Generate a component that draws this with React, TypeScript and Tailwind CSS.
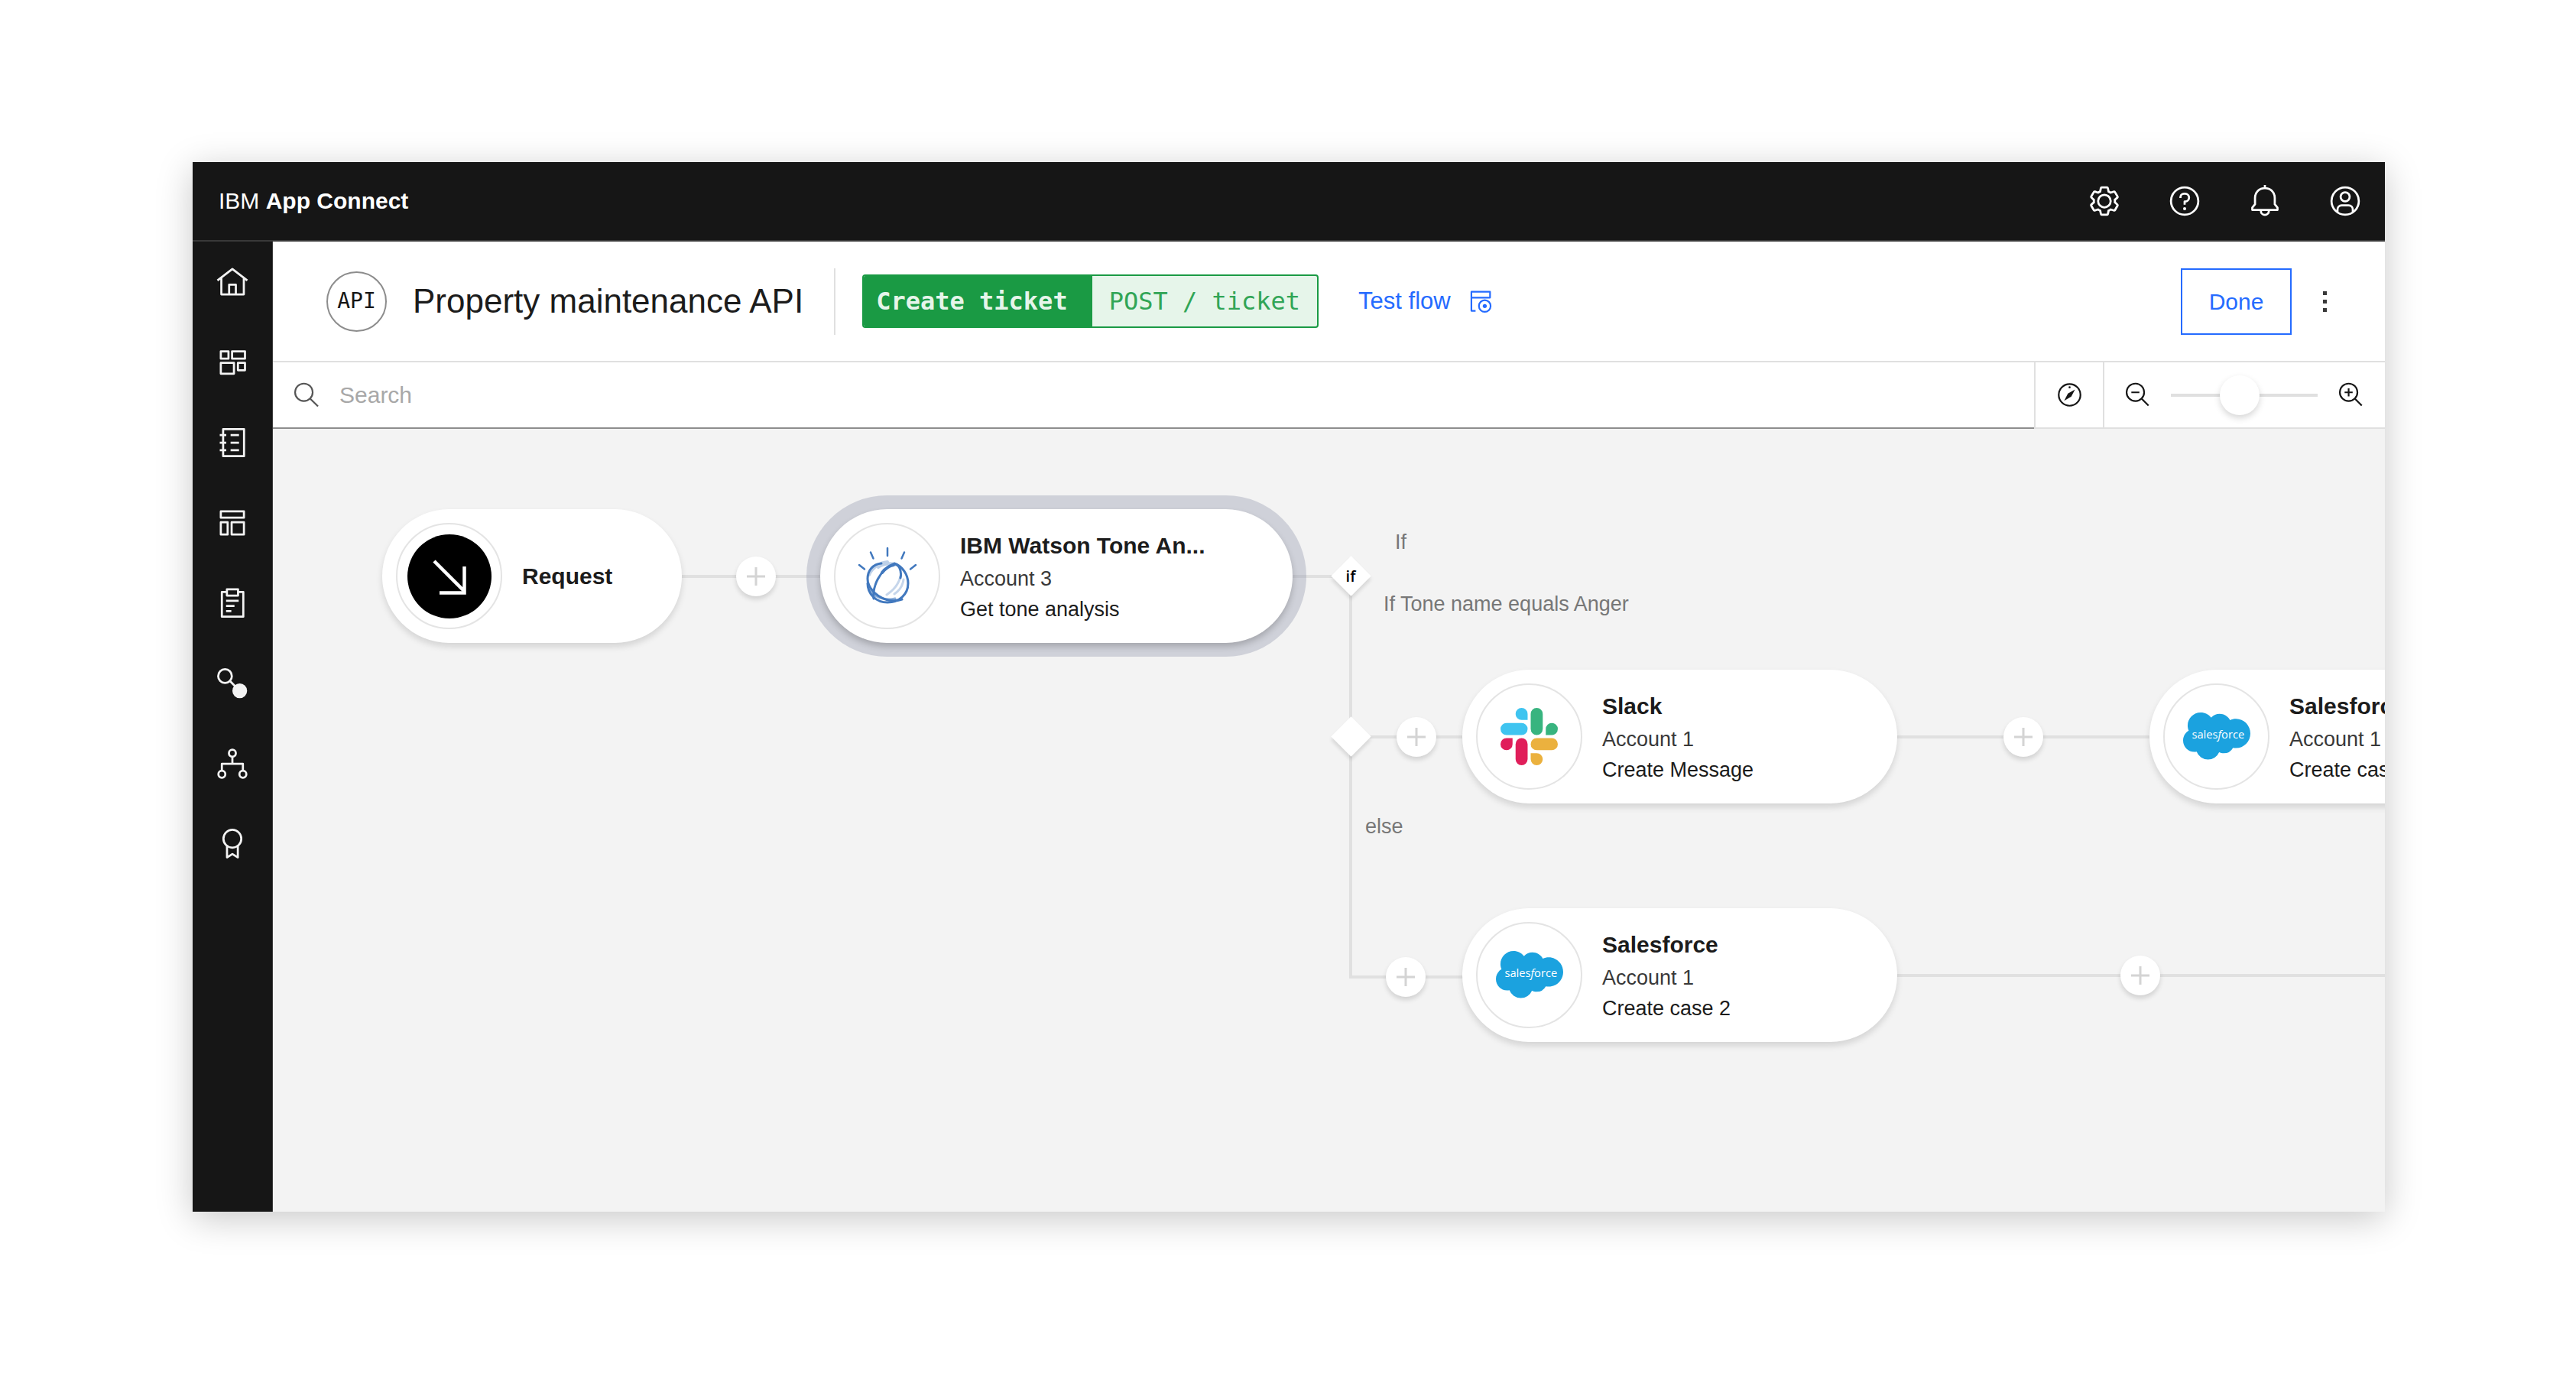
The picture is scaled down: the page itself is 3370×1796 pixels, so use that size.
import React from 'react';

type IconProps = { children: React.ReactNode; className?: string; stroke?: number };

function Icon({ children, className = 'size-11', stroke = 2 }: IconProps) {
  return (
    <svg
      viewBox="0 0 32 32"
      fill="none"
      stroke="currentColor"
      strokeWidth={stroke}
      strokeLinejoin="round"
      className={className}
      aria-hidden="true"
    >
      {children}
    </svg>
  );
}

const headerActions = [
  {
    label: 'Settings',
    icon: (
      <Icon stroke={0}>
        <path
          fill="currentColor"
          d="M27,16.76c0-.25,0-.5,0-.76s0-.51,0-.77l1.92-1.68A2,2,0,0,0,29.3,11L26.94,7a2,2,0,0,0-1.73-1,2,2,0,0,0-.64.1l-2.43.82a11.35,11.35,0,0,0-1.31-.75l-.51-2.52a2,2,0,0,0-2-1.61H13.64a2,2,0,0,0-2,1.61l-.51,2.52a11.48,11.48,0,0,0-1.32.75L7.43,6.06A2,2,0,0,0,6.79,6,2,2,0,0,0,5.06,7L2.7,11a2,2,0,0,0,.41,2.51L5,15.24c0,.25,0,.5,0,.76s0,.51,0,.77L3.11,18.45A2,2,0,0,0,2.7,21L5.06,25a2,2,0,0,0,1.73,1,2,2,0,0,0,.64-.1l2.43-.82a11.35,11.35,0,0,0,1.31.75l.51,2.52a2,2,0,0,0,2,1.61h4.72a2,2,0,0,0,2-1.61l.51-2.52a11.48,11.48,0,0,0,1.32-.75l2.42.82a2,2,0,0,0,.64.1,2,2,0,0,0,1.73-1L29.3,21a2,2,0,0,0-.41-2.51ZM25.21,24l-3.43-1.16a8.86,8.86,0,0,1-2.71,1.57L18.36,28H13.64l-.71-3.55a9.36,9.36,0,0,1-2.7-1.57L6.79,24,4.43,20l2.72-2.4a8.9,8.9,0,0,1,0-3.13L4.43,12,6.79,8l3.43,1.16a8.86,8.86,0,0,1,2.71-1.57L13.64,4h4.72l.71,3.55a9.36,9.36,0,0,1,2.7,1.57L25.21,8,27.57,12l-2.72,2.4a8.9,8.9,0,0,1,0,3.13L27.57,20Z"
        />
        <circle cx="16" cy="16" r="6" strokeWidth="2" />
      </Icon>
    ),
  },
  {
    label: 'Help',
    icon: (
      <Icon>
        <circle cx="16" cy="16" r="13" />
        <path d="M12 13v-.5A3.5 3.5 0 0 1 15.5 9h1a3.7 3.7 0 0 1 0 7.4H16v3" />
        <circle cx="16" cy="23.3" r="1.5" fill="currentColor" stroke="none" />
      </Icon>
    ),
  },
  {
    label: 'Notifications',
    icon: (
      <Icon>
        <path d="M16 3.7C10.5 3.7 6.6 7.7 6.6 13v6L4 22.2v2.2h24v-2.200L25.4 19v-6C25.4 7.7 21.5 3.7 16 3.7ZM16 3.7V.8M12.2 24.5v.9a3.8 3.8 0 0 0 7.6 0v-.9" />
      </Icon>
    ),
  },
  {
    label: 'Profile',
    icon: (
      <Icon>
        <circle cx="16" cy="16" r="13" />
        <circle cx="16" cy="12" r="4.3" />
        <path d="M8.7 26.5V24a4 4 0 0 1 4-4h6.6a4 4 0 0 1 4 4v2.5" />
      </Icon>
    ),
  },
];

const navItems = [
  {
    label: 'Home',
    icon: (
      <Icon>
        <path d="M1.8 14.5 16 3.5l14.2 11M5.5 12v15.700h21.4V12M12.9 27.500v-9h6.4v9" />
      </Icon>
    ),
  },
  {
    label: 'Dashboard',
    icon: (
      <Icon>
        <path d="M5 5.500h7.300v7H5zM15.700 5.500H28v7H15.700zM5 16.500h12.500v10.300H5zM21.300 16.500H28v7h-6.700z" />
      </Icon>
    ),
  },
  {
    label: 'Catalog',
    icon: (
      <Icon>
        <path d="M7.200 3.200h19.900v25.700H7.200zM4 8.800h6.200M4 16h6.200M4 23.200h6.200M14.300 8.800h8M14.300 16h8M14.300 23.200h8" />
      </Icon>
    ),
  },
  {
    label: 'Templates',
    icon: (
      <Icon>
        <path d="M5 5h22v6H5zM5 15.300h6.500V27H5zM15.300 15.300H27V27H15.300z" />
      </Icon>
    ),
  },
  {
    label: 'Logs',
    icon: (
      <Icon>
        <path d="M10.500 5.300H6v23.600h20.400V5.300h-4.500M10.800 2.800h10.600v6H10.800zM10 13.800h12M10 18.600h8M10 23.500h5" />
      </Icon>
    ),
  },
  {
    label: 'Connectivity',
    icon: (
      <Icon>
        <circle cx="9" cy="9" r="6.500" />
        <path d="m13.500 13.500 5 5" />
        <circle cx="23" cy="23" r="7" fill="currentColor" stroke="none" />
      </Icon>
    ),
  },
  {
    label: 'Topology',
    icon: (
      <Icon>
        <circle cx="16" cy="6" r="3.300" />
        <circle cx="6" cy="26" r="3.300" />
        <circle cx="26" cy="26" r="3.300" />
        <path d="M16 9v7M6 23v-7h20v7" />
      </Icon>
    ),
  },
  {
    label: 'Certificates',
    icon: (
      <Icon>
        <circle cx="16" cy="11" r="8.500" />
        <path d="M10.900 17.500v11.300L16 25.500l5.200 3.300V17.500" />
      </Icon>
    ),
  },
];

function WatsonLogo() {
  return (
    <svg
      viewBox="0 0 80 80"
      className="size-20"
      fill="none"
      stroke="#4178be"
      strokeWidth="3"
      strokeLinecap="round"
      aria-hidden="true"
    >
      <path d="M40 3v10M18 8.500l3.500 8M62 8.500l-3.500 8M3 25l7 5.500M77 25l-7 5.500" strokeWidth="2.500" />
      <path d="M16 38c4-9 13-16 24-17M28 28c6-5 18-6 24-3" strokeOpacity=".35" strokeWidth="4" />
      <path d="M57 40c-2 9-9 18-18 24M61 44c-1 8-6 15-12 19" strokeOpacity=".3" />
      <path d="M32 23c-11 1-18 9-18 20 0 17 23 34 45 27" />
      <path d="M22 69c-2-16 8-37 25-45 8-2 12 9 10 18" />
      <path d="M33 35c4-5 9-9 15-10" strokeWidth="4" />
      <path d="M49 23c11 4 18 15 18 26 0 15-12 25-27 25S14 63 14 49" />
      <path d="M16 57c6 10 20 15 34 12" strokeOpacity=".6" />
    </svg>
  );
}

function SlackLogo() {
  return (
    <svg viewBox="0 0 24 24" className="size-[75px]" aria-hidden="true">
      <path
        fill="#e01e5a"
        d="M5.042 15.165a2.528 2.528 0 0 1-2.520 2.523A2.528 2.528 0 0 1 0 15.165a2.527 2.527 0 0 1 2.522-2.520h2.520v2.520zM6.313 15.165a2.527 2.527 0 0 1 2.521-2.520 2.527 2.527 0 0 1 2.521 2.520v6.313A2.528 2.528 0 0 1 8.834 24a2.528 2.528 0 0 1-2.521-2.522v-6.313z"
      />
      <path
        fill="#3fc4f0"
        d="M8.834 5.042a2.528 2.528 0 0 1-2.521-2.520A2.528 2.528 0 0 1 8.834 0a2.528 2.528 0 0 1 2.521 2.522v2.520H8.834zM8.834 6.313a2.528 2.528 0 0 1 2.521 2.521 2.528 2.528 0 0 1-2.521 2.521H2.522A2.528 2.528 0 0 1 0 8.834a2.528 2.528 0 0 1 2.522-2.521h6.312z"
      />
      <path
        fill="#38b47f"
        d="M18.956 8.834a2.528 2.528 0 0 1 2.522-2.521A2.528 2.528 0 0 1 24 8.834a2.528 2.528 0 0 1-2.522 2.521h-2.522V8.834zM17.688 8.834a2.528 2.528 0 0 1-2.523 2.521 2.527 2.527 0 0 1-2.520-2.521V2.522A2.527 2.527 0 0 1 15.165 0a2.528 2.528 0 0 1 2.523 2.522v6.312z"
      />
      <path
        fill="#ebb13e"
        d="M15.165 18.956a2.528 2.528 0 0 1 2.523 2.522A2.528 2.528 0 0 1 15.165 24a2.527 2.527 0 0 1-2.520-2.522v-2.522h2.520zM15.165 17.688a2.527 2.527 0 0 1-2.520-2.523 2.526 2.526 0 0 1 2.520-2.520h6.313A2.527 2.527 0 0 1 24 15.165a2.528 2.528 0 0 1-2.522 2.523h-6.313z"
      />
    </svg>
  );
}

function SalesforceLogo() {
  return (
    <svg viewBox="0 3.600 24 17.200" className="w-[88px]" aria-hidden="true">
      <path
        fill="#1ba2df"
        d="M10.006 5.415a4.195 4.195 0 0 1 3.045-1.306c1.560 0 2.954.9 3.690 2.205.63-.3 1.350-.45 2.100-.45 2.850 0 5.159 2.340 5.159 5.220s-2.310 5.220-5.176 5.220c-.345 0-.69-.044-1.020-.104a3.750 3.750 0 0 1-3.300 1.950c-.6 0-1.155-.15-1.650-.375A4.314 4.314 0 0 1 8.880 20.400a4.302 4.302 0 0 1-4.050-2.820c-.27.062-.54.076-.825.076-2.204 0-4.005-1.800-4.005-4.050 0-1.500.811-2.805 2.010-3.510-.255-.57-.39-1.200-.39-1.846 0-2.580 2.100-4.650 4.650-4.650 1.530 0 2.850.705 3.720 1.800"
      />
      <text x="12.500" y="12.800" textAnchor="middle" fontSize="4" fill="#fff" className="font-['Open_Sans',sans-serif]">
        sales<tspan fontStyle="italic">f</tspan>orce
      </text>
    </svg>
  );
}

function RequestLogo() {
  return (
    <span className="flex size-[110px] items-center justify-center rounded-full bg-black text-white">
      <svg viewBox="0 0 44 54" className="h-[54px] w-11" fill="none" stroke="currentColor" strokeWidth="4.500" aria-hidden="true">
        <path d="m2 7 38 38M9 48.500h32.500V14" />
      </svg>
    </span>
  );
}

type NodeCardProps = {
  place: string;
  logo: React.ReactNode;
  title: string;
  account?: string;
  action?: string;
  selected?: boolean;
};

function NodeCard({ place, logo, title, account, action, selected }: NodeCardProps) {
  return (
    <button
      type="button"
      className={`absolute flex h-[175px] items-center gap-[26px] rounded-full bg-white pl-[18px] text-left ${place} ${
        selected
          ? 'shadow-[0_5px_9px_rgba(0,0,0,0.2),0_0_0_18px_rgba(141,147,170,0.35)]'
          : 'shadow-[0_5px_9px_rgba(0,0,0,0.13)]'
      }`}
    >
      <span className="flex size-[139px] shrink-0 items-center justify-center rounded-full border-2 border-[#e4e4e4]">
        {logo}
      </span>
      <span className="flex flex-col whitespace-nowrap">
        <span className="text-[30px] leading-[46px] font-bold text-[#1c1c1c]">{title}</span>
        {account && <span className="text-[27px] leading-10 text-[#393939]">{account}</span>}
        {action && <span className="text-[27px] leading-10 text-[#1c1c1c]">{action}</span>}
      </span>
    </button>
  );
}

function AddButton({ place }: { place: string }) {
  return (
    <button
      type="button"
      aria-label="Add node"
      className={`absolute flex size-[52px] items-center justify-center rounded-full bg-white text-[#d4d4d4] shadow-[0_4px_6px_rgba(0,0,0,0.14)] ${place}`}
    >
      <svg viewBox="0 0 24 24" className="size-6" stroke="currentColor" strokeWidth="3" aria-hidden="true">
        <path d="M12 0v24M0 12h24" />
      </svg>
    </button>
  );
}

function Wire({ place }: { place: string }) {
  return <span className={`absolute bg-[#e0e0e0] ${place}`} />;
}

function Diamond({ place }: { place: string }) {
  return <span className={`absolute size-[37px] rotate-45 bg-white shadow-[3px_3px_5px_rgba(0,0,0,0.12)] ${place}`} />;
}

function FlowCanvas() {
  return (
    <main className="relative flex-1 overflow-hidden bg-[#f3f3f3]">
      <Wire place="left-[535px] top-[191px] h-1 w-[182px]" />
      <Wire place="left-[1334px] top-[191px] h-1 w-[60px]" />
      <Wire place="left-[1408px] top-[193px] h-[526px] w-1" />
      <Wire place="left-[1410px] top-[401px] h-1 w-[1060px]" />
      <Wire place="left-[1408px] top-[715px] h-1 w-[160px]" />
      <Wire place="left-[2120px] top-[713px] h-1 right-0" />

      <NodeCard place="left-[143px] top-[105px] w-[392px]" logo={<RequestLogo />} title="Request" />
      <AddButton place="left-[606px] top-[167px]" />
      <NodeCard
        place="left-[716px] top-[105px] w-[618px]"
        logo={<WatsonLogo />}
        title="IBM Watson Tone An..."
        account="Account 3"
        action="Get tone analysis"
        selected
      />

      <Diamond place="left-[1392px] top-[174px]" />
      <span className="absolute top-[177px] left-[1384px] w-[52px] text-center font-['Open_Sans',sans-serif] text-xl leading-8 font-semibold text-black">
        if
      </span>
      <span className="absolute top-[128px] left-[1468px] text-[27px] leading-10 text-[#777]">If</span>
      <span className="absolute top-[209px] left-[1453px] text-[27px] leading-10 whitespace-nowrap text-[#777]">
        If Tone name equals Anger
      </span>

      <Diamond place="left-[1392px] top-[384px]" />
      <AddButton place="left-[1470px] top-[377px]" />
      <NodeCard
        place="left-[1556px] top-[315px] w-[569px]"
        logo={<SlackLogo />}
        title="Slack"
        account="Account 1"
        action="Create Message"
      />
      <AddButton place="left-[2264px] top-[377px]" />
      <NodeCard
        place="left-[2455px] top-[315px] w-[569px]"
        logo={<SalesforceLogo />}
        title="Salesforce"
        account="Account 1"
        action="Create case 1"
      />

      <span className="absolute top-[500px] left-[1429px] text-[27px] leading-10 text-[#777]">else</span>
      <AddButton place="left-[1456px] top-[691px]" />
      <NodeCard
        place="left-[1556px] top-[627px] w-[569px]"
        logo={<SalesforceLogo />}
        title="Salesforce"
        account="Account 1"
        action="Create case 2"
      />
      <AddButton place="left-[2417px] top-[689px]" />
    </main>
  );
}

function Toolbar() {
  return (
    <div className="flex h-[158px] items-center border-b-2 border-[#e0e0e0] bg-white pr-[35px] pl-[70px]">
      <span className="flex size-[79px] items-center justify-center rounded-full border-2 border-[#8d8d8d] font-['DejaVu_Sans_Mono',monospace] text-[28px] font-medium text-[#161616]">
        API
      </span>
      <h1 className="ml-[34px] text-[44px] leading-[60px] whitespace-nowrap text-[#1c1c1c]">Property maintenance API</h1>
      <span className="ml-10 h-[87px] w-0.5 bg-[#e0e0e0]" />
      <button
        type="button"
        className="ml-[35px] flex h-[70px] overflow-hidden rounded border-2 border-[#1a9a44] bg-[#e6f5ea] font-['DejaVu_Sans_Mono','Liberation_Mono',monospace] text-[32px] leading-[66px] whitespace-pre"
      >
        <span className="bg-[#1a9a44] pr-8 pl-4 font-bold text-[#e6f5ea]">Create ticket</span>
        <span className="px-[22px] text-[#31a556]">POST / ticket</span>
      </button>
      <a href="#test" className="ml-[52px] flex items-center gap-[22px] text-[31px] leading-10 text-[#256bff]">
        Test flow
        <Icon className="size-[35px]">
          <path d="M4.500 4.300h22.300v7H4.500zM4.500 11v16H9.500" />
          <circle cx="20.500" cy="21.300" r="7" />
          <circle cx="20.500" cy="21.300" r="2.400" fill="currentColor" stroke="none" />
        </Icon>
      </a>
      <button
        type="button"
        className="ml-auto h-[87px] w-[145px] border-2 border-[#256bff] text-[30px] text-[#256bff]"
      >
        Done
      </button>
      <button type="button" aria-label="More options" className="flex h-[87px] w-[87px] flex-col items-center justify-center gap-1.5 text-[#393939]">
        <span className="size-[5px] bg-current" />
        <span className="size-[5px] bg-current" />
        <span className="size-[5px] bg-current" />
      </button>
    </div>
  );
}

function SearchRow() {
  return (
    <div className="flex h-[87px] border-b-2 border-[#e0e0e0] bg-white text-[#161616]">
      <label className="-mb-0.5 flex flex-1 items-center gap-[26px] border-b-2 border-[#8d8d8d] pl-[26px]">
        <Icon className="size-[35px] text-[#555]">
          <circle cx="13.300" cy="13" r="10.500" />
          <path d="m20.800 20.500 9.400 9.300" />
        </Icon>
        <input
          type="search"
          aria-label="Search"
          placeholder="Search"
          className="h-20 flex-1 text-[30px] outline-none placeholder:text-[#a8a8a8]"
        />
      </label>
      <button type="button" aria-label="Fit to view" className="flex w-[92px] items-center justify-center border-x-2 border-[#e0e0e0]">
        <Icon className="size-[35px]">
          <circle cx="16" cy="16" r="13" />
          <path d="M22.500 9.500 18 18l-8.500 5L14 14.500z" fill="currentColor" stroke="none" />
          <circle cx="16" cy="7" r="1.200" fill="currentColor" stroke="none" />
        </Icon>
      </button>
      <div className="flex items-center gap-[26px] pr-[27px] pl-[26px]">
        <button type="button" aria-label="Zoom out">
          <Icon className="size-[35px]">
            <circle cx="13.300" cy="13" r="10.500" />
            <path d="m20.800 20.500 8.200 8.300M8.500 13h9.600" />
          </Icon>
        </button>
        <input
          type="range"
          aria-label="Zoom"
          defaultValue={46}
          className="h-[52px] w-48 appearance-none bg-transparent [&::-webkit-slider-runnable-track]:h-1 [&::-webkit-slider-runnable-track]:bg-[#e0e0e0] [&::-webkit-slider-thumb]:-mt-6 [&::-webkit-slider-thumb]:size-[52px] [&::-webkit-slider-thumb]:appearance-none [&::-webkit-slider-thumb]:rounded-full [&::-webkit-slider-thumb]:bg-white [&::-webkit-slider-thumb]:shadow-[0_4px_8px_rgba(0,0,0,0.16)]"
        />
        <button type="button" aria-label="Zoom in">
          <Icon className="size-[35px]">
            <circle cx="13.300" cy="13" r="10.500" />
            <path d="m20.800 20.500 8.200 8.300M8.500 13h9.600M13.300 8.200v9.600" />
          </Icon>
        </button>
      </div>
    </div>
  );
}

export default function App() {
  return (
    <div className="flex min-h-screen bg-white pt-[212px] pr-[250px] pb-[211px] pl-[252px] font-['Liberation_Sans',Arial,sans-serif]">
      <div className="flex flex-1 flex-col shadow-[0_9px_44px_rgba(0,0,0,0.22)]">
        <header className="flex h-[104px] items-center justify-between border-b-2 border-[#393939] bg-[#161616] pl-[34px] text-white">
          <p className="text-[30px] leading-10">
            IBM <strong className="font-bold">App Connect</strong>
          </p>
          <div className="flex h-full">
            {headerActions.map((item) => (
              <button key={item.label} type="button" aria-label={item.label} className="flex w-[105px] items-center justify-center">
                {item.icon}
              </button>
            ))}
          </div>
        </header>
        <div className="flex flex-1">
          <nav className="flex w-[105px] flex-col border-r border-[#393939] bg-[#161616] text-[#f3f3f3]">
            {navItems.map((item) => (
              <a key={item.label} href="#" aria-label={item.label} className="flex h-[105px] items-center justify-center">
                {item.icon}
              </a>
            ))}
          </nav>
          <div className="flex min-w-0 flex-1 flex-col">
            <Toolbar />
            <SearchRow />
            <FlowCanvas />
          </div>
        </div>
      </div>
    </div>
  );
}
